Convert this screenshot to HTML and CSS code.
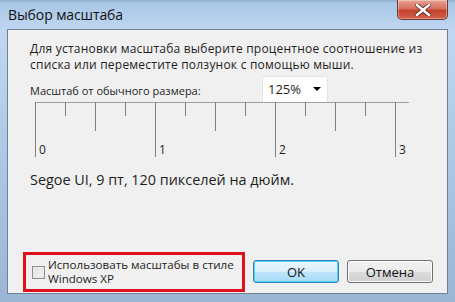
FILE: index.html
```html
<!DOCTYPE html>
<html lang="ru">
<head>
  <meta charset="utf-8" />
  <title>Выбор масштаба</title>
  <link rel="stylesheet" href="styles.css">
</head>
<body>
  <div class="window">
    <!-- Заголовок окна -->
    <header class="titlebar">
      <span class="title">Выбор масштаба</span>
      <button class="close" aria-label="Закрыть">
        <svg width="16" height="12" viewBox="0 0 16 12">
          <path d="M2 1 L14 11 M14 1 L2 11" stroke="#5a2a24" stroke-width="4.2" stroke-linecap="square"/>
          <path d="M2 1 L14 11 M14 1 L2 11" stroke="#fff" stroke-width="2.4" stroke-linecap="square"/>
        </svg>
      </button>
    </header>

    <main class="client">
      <p class="intro">Для установки масштаба выберите процентное соотношение из<br>списка или переместите ползунок с помощью мыши.</p>

      <div class="scale-row">
        <label for="scale">Масштаб от обычного размера:</label>
        <div class="select" id="scale">
          <span>125%</span>
          <svg width="8" height="4" viewBox="0 0 8 4"><path d="M0 0 H8 L4 4 Z" fill="#000"/></svg>
        </div>
      </div>

      <svg class="ruler" width="380" height="56" viewBox="0 0 380 56">
        <path d="M0 0.5 H374" stroke="#a0a0a0" fill="none"/>
        <g stroke="#808080" fill="none">
          <path d="M0.5 0 V55 M120.5 0 V55 M240.5 0 V55 M360.5 0 V55"/>
          <path d="M60.5 0 V29 M180.5 0 V29 M300.5 0 V29"/>
          <path d="M30.5 0 V14 M90.5 0 V14 M150.5 0 V14 M210.5 0 V14 M270.5 0 V14 M330.5 0 V14"/>
        </g>
        <g class="ruler-num">
          <text x="4" y="52">0</text>
          <text x="124" y="52">1</text>
          <text x="244" y="52">2</text>
          <text x="364" y="52">3</text>
        </g>
      </svg>

      <p class="font-info">Segoe UI, 9 пт, 120 пикселей на дюйм.</p>

      <footer class="actions">
        <label class="xp-option">
          <span class="checkbox"></span>
          <span class="xp-text">Использовать масштабы в стиле<br>Windows XP</span>
        </label>
        <button class="btn btn-default">OK</button>
        <button class="btn">Отмена</button>
      </footer>
    </main>
  </div>
</body>
</html>
```

FILE: styles.css
```css
*{box-sizing:border-box;margin:0;padding:0}

body{
  font-family:'Open Sans','Noto Sans',Arial,sans-serif;
  background:#9fbbd8;color:#1e1e1e;
  width:455px;height:302px;overflow:hidden;
}

/* —— Рамка окна —— */
.window{
  width:455px;height:302px;
  display:flex;flex-direction:column;
  padding:0 7px 8px 7px;
  background:linear-gradient(180deg,#8eaccd 0,#a9c6e6 3px,#bfd7f1 30px,#aac5e2 60%,#9ab6d4 100%);
}

.titlebar{
  height:29px;flex:none;
  display:flex;justify-content:space-between;align-items:flex-start;
}
.title{font-size:14px;line-height:29px;padding-left:1px;color:#111;letter-spacing:-0.1px}
.close{
  width:51px;height:20px;
  border:1px solid #6b3a34;border-top:none;border-radius:0 0 5px 5px;
  background:linear-gradient(180deg,#e9a394 0,#d8705e 45%,#c4422d 55%,#d4604a 100%);
  display:flex;align-items:center;justify-content:center;
  box-shadow:inset 0 0 0 1px rgba(255,255,255,.35);
}

/* —— Клиентская область —— */
.client{
  flex:1;
  background:#f0f0f0;
  border:1px solid #6f8196;
  display:flex;flex-direction:column;
  padding:11px 0 0 22px;
  font-size:12px;
}
.intro{line-height:16.4px;letter-spacing:0.22px}

.scale-row{display:flex;align-items:center;margin-top:2px;height:26px}
.scale-row label{width:232px;font-size:11px;padding-top:3px}
.select{
  width:66px;height:26px;
  background:#fff;border:1px solid #e4e4e4;border-bottom:none;
  display:flex;align-items:center;justify-content:space-between;
  padding:0 6px 0 5px;font-size:13px;
}

.ruler{display:block;margin:0 0 0 5px}
.ruler-num text{font-family:'Open Sans','Noto Sans',Arial,sans-serif;font-size:12px;fill:#1e1e1e}

.font-info{font-size:14.4px;margin-top:12px;line-height:20px}

/* —— Нижняя часть —— */
.actions{
  margin-top:auto;margin-left:-7px;
  display:flex;align-items:flex-end;gap:8px;
  padding-bottom:1px;
}
.xp-option{
  width:222px;height:40px;
  border:3px solid #e0101c;
  display:flex;align-items:center;gap:3px;
  padding-left:6px;
}
.xp-text{font-size:11.6px;line-height:14px;white-space:nowrap}
.checkbox{
  width:13px;height:13px;flex:none;
  border:1px solid #8f8f8f;
  background:linear-gradient(135deg,#dcdcdc,#f8f8f8);
  box-shadow:inset 0 0 0 2px #eaeaea;
}
.btn{
  width:86px;height:23px;margin-bottom:9px;
  font-family:inherit;font-size:13px;color:#111;
  border:1px solid #707070;border-radius:3px;
  background:linear-gradient(180deg,#f2f2f2 0,#ebebeb 50%,#dddddd 51%,#cfcfcf 100%);
  box-shadow:inset 0 0 0 1px #fcfcfc;
}
.btn-default{
  border-color:#3c7fb1;
  background:linear-gradient(180deg,#eaf6fd 0,#d9f0fc 50%,#bee6fd 51%,#a7d9f5 100%);
  box-shadow:inset 0 0 0 1px #48d6f8;
}
```
